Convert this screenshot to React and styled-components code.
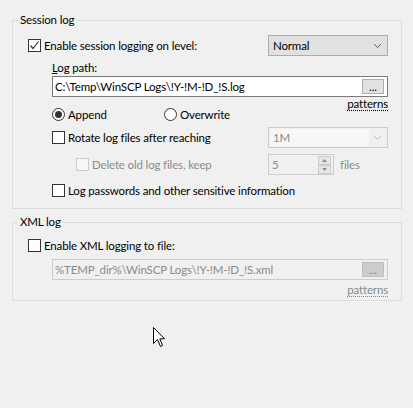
import React from "react"
import styled, { createGlobalStyle } from "styled-components"

const GlobalStyle = createGlobalStyle`
  html, body {
    margin: 0;
    padding: 0;
    background: #f0f0f0;
  }
  body {
    font-family: Lato, "Liberation Sans", Arial, sans-serif;
    font-size: 11.5px;
    letter-spacing: -0.15px;
    color: #000;
  }
`

const Page = styled.div`
  position: relative;
  width: 413px;
  height: 408px;
  padding: 13px 11px 0 12px;
  box-sizing: border-box;
  display: flex;
  flex-direction: column;
  gap: 6px;
`

const Group = styled.fieldset`
  margin: 0;
  border: 1px solid #dcdcdc;
  padding: ${p => p.$pad};
  display: flex;
  flex-direction: column;
  min-width: 0;
`

const Caption = styled.legend`
  margin-left: -10px;
  padding: 0 2px;
  line-height: 14px;
`

const Row = styled.div`
  display: flex;
  align-items: ${p => p.$align || "center"};
  height: ${p => p.$h}px;
  margin-top: ${p => p.$mt || 0}px;
  padding-left: ${p => p.$indent || 0}px;
`

const Label = styled.label`
  display: flex;
  align-items: center;
  gap: 3px;
  line-height: 15px;
  color: ${p => (p.$disabled ? "#8b8b8b" : "#000")};
  white-space: nowrap;
`

const Box = styled.span`
  width: 13px;
  height: 13px;
  box-sizing: border-box;
  border: 1px solid ${p => (p.$disabled ? "#cccccc" : "#333333")};
  background: ${p => (p.$disabled ? "#f7f7f7" : "#fff")};
  display: inline-flex;
  align-items: center;
  justify-content: center;
  flex: none;
`

const Radio = styled.span`
  width: 13px;
  height: 13px;
  box-sizing: border-box;
  border: 1px solid #333;
  border-radius: 50%;
  background: #fff;
  display: inline-flex;
  align-items: center;
  justify-content: center;
  flex: none;

  &::after {
    content: "";
    width: 7px;
    height: 7px;
    border-radius: 50%;
    background: ${p => (p.$on ? "#333" : "transparent")};
  }
`

const Combo = styled.div`
  margin-left: auto;
  width: 120px;
  height: 21px;
  box-sizing: border-box;
  border: 1px solid ${p => (p.$disabled ? "#cccccc" : "#adadad")};
  background: ${p => (p.$disabled ? "#f0f0f0" : "#e1e1e1")};
  display: flex;
  align-items: stretch;
  padding: 1px;
`

const ComboText = styled.span`
  flex: 1;
  display: flex;
  align-items: center;
  padding-left: 3px;
  background: ${p => (p.$disabled ? "#f7f7f7" : "transparent")};
  color: ${p => (p.$disabled ? "#8b8b8b" : "#000")};
`

const ComboArrow = styled.span`
  width: 17px;
  display: flex;
  align-items: center;
  justify-content: center;
`

const PathLabel = styled.div`
  line-height: 15px;
  margin: 4px 0 0 24px;
`

const Key = styled.span`
  text-decoration: underline;
`

const PathField = styled.div`
  margin: ${p => p.$mt}px 0 0 24px;
  height: 21px;
  box-sizing: border-box;
  border: 1px solid ${p => (p.$disabled ? "#cccccc" : "#7a7a7a")};
  background: ${p => (p.$disabled ? "#f0f0f0" : "#fff")};
  display: flex;
  align-items: center;
  padding: 0 3px 0 2px;
  color: ${p => (p.$disabled ? "#8b8b8b" : "#000")};
`

const PathText = styled.span`
  flex: 1;
  white-space: nowrap;
  overflow: hidden;
`

const Browse = styled.span`
  width: 22px;
  height: 15px;
  box-sizing: border-box;
  border: 1px solid ${p => (p.$disabled ? "#bfbfbf" : "#adadad")};
  background: ${p => (p.$disabled ? "#cccccc" : "#e1e1e1")};
  color: ${p => (p.$disabled ? "#838383" : "#000")};
  display: flex;
  align-items: flex-end;
  justify-content: center;
  line-height: 12px;
  font-size: 11px;
  letter-spacing: 0;
`

const Patterns = styled.span`
  margin-left: auto;
  line-height: 14px;
  color: ${p => (p.$disabled ? "#8b8b8b" : "#000")};
  text-decoration: underline dotted;
  text-underline-offset: 2px;
`

const Options = styled.div`
  display: flex;
  margin-top: 10px;
`

const OptionSlot = styled.div`
  width: 112px;
`

const Spin = styled.div`
  margin-left: auto;
  width: 66px;
  height: 21px;
  box-sizing: border-box;
  border: 1px solid #cccccc;
  background: #f0f0f0;
  display: flex;
  align-items: center;
  padding: 0 2px 0 3px;
  color: #8b8b8b;
`

const SpinValue = styled.span`
  flex: 1;
`

const SpinButtons = styled.span`
  display: flex;
  flex-direction: column;
  width: 13px;
`

const SpinBtn = styled.span`
  height: 7px;
  border: 1px solid #cccccc;
  background: #e6e6e6;
  display: flex;
  align-items: center;
  justify-content: center;
`

const Unit = styled.span`
  width: 48px;
  padding-left: 6px;
  color: #8b8b8b;
  line-height: 15px;
`

const Cursor = styled.svg`
  position: absolute;
  left: 153px;
  top: 327px;
`

const Check = () => (
  <svg width="11" height="11" viewBox="0 0 11 11">
    <path d="M1.5 5.5 L4 8.5 L9.5 1.5" fill="none" stroke="#333" strokeWidth="1.2" />
  </svg>
)

const Chevron = ({ color }) => (
  <svg width="7" height="4" viewBox="0 0 7 4">
    <path d="M0.3 0.3 L3.5 3.5 L6.7 0.3" fill="none" stroke={color} strokeWidth="1" />
  </svg>
)

const Tri = ({ up }) => (
  <svg width="5" height="3" viewBox="0 0 5 3">
    <path d={up ? "M0 3 L2.5 0 L5 3 Z" : "M0 0 L2.5 3 L5 0 Z"} fill="#8b8b8b" />
  </svg>
)

const App = () => (
  <Page>
    <GlobalStyle />
    <Group $pad="0 13px 10px 15px">
      <Caption>Session log</Caption>
      <Row $h={21} $mt={8}>
        <Label>
          <Box><Check /></Box>
          Enable session logging on level:
        </Label>
        <Combo>
          <ComboText>Normal</ComboText>
          <ComboArrow><Chevron color="#555" /></ComboArrow>
        </Combo>
      </Row>
      <PathLabel><Key>L</Key>og path:</PathLabel>
      <PathField $mt={1}>
        <PathText>C:\Temp\WinSCP Logs\!Y-!M-!D_!S.log</PathText>
        <Browse>...</Browse>
      </PathField>
      <Row $h={24} $align="flex-start" $indent={24}>
        <Options>
          <OptionSlot>
            <Label><Radio $on />Append</Label>
          </OptionSlot>
          <OptionSlot>
            <Label><Radio />Overwrite</Label>
          </OptionSlot>
        </Options>
        <Patterns>patterns</Patterns>
      </Row>
      <Row $h={21} $mt={6} $indent={24}>
        <Label>
          <Box />
          Rotate log files after reaching
        </Label>
        <Combo $disabled>
          <ComboText $disabled>1M</ComboText>
          <ComboArrow><Chevron color="#b5b5b5" /></ComboArrow>
        </Combo>
      </Row>
      <Row $h={21} $mt={6} $indent={48}>
        <Label $disabled>
          <Box $disabled />
          Delete old log files, keep
        </Label>
        <Spin>
          <SpinValue>5</SpinValue>
          <SpinButtons>
            <SpinBtn><Tri up /></SpinBtn>
            <SpinBtn><Tri /></SpinBtn>
          </SpinButtons>
        </Spin>
        <Unit>files</Unit>
      </Row>
      <Row $h={15} $mt={8} $indent={24}>
        <Label>
          <Box />
          Log passwords and other sensitive information
        </Label>
      </Row>
    </Group>
    <Group $pad="0 13px 3px 15px">
      <Caption>XML log</Caption>
      <Row $h={15} $mt={9}>
        <Label>
          <Box />
          Enable XML logging to file:
        </Label>
      </Row>
      <PathField $mt={6} $disabled>
        <PathText>%TEMP_dir%\WinSCP Logs\!Y-!M-!D_!S.xml</PathText>
        <Browse $disabled>...</Browse>
      </PathField>
      <Row $h={15} $mt={2}>
        <Patterns $disabled>patterns</Patterns>
      </Row>
    </Group>
    <Cursor width="13" height="21" viewBox="0 0 13 21">
      <path
        d="M0.5 0.5 L0.5 16.5 L4.5 12.5 L7.5 19.5 L9.5 18.5 L6.8 11.8 L11.5 11.8 Z"
        fill="#fff"
        stroke="#000"
        strokeWidth="1"
      />
    </Cursor>
  </Page>
)

export default App
